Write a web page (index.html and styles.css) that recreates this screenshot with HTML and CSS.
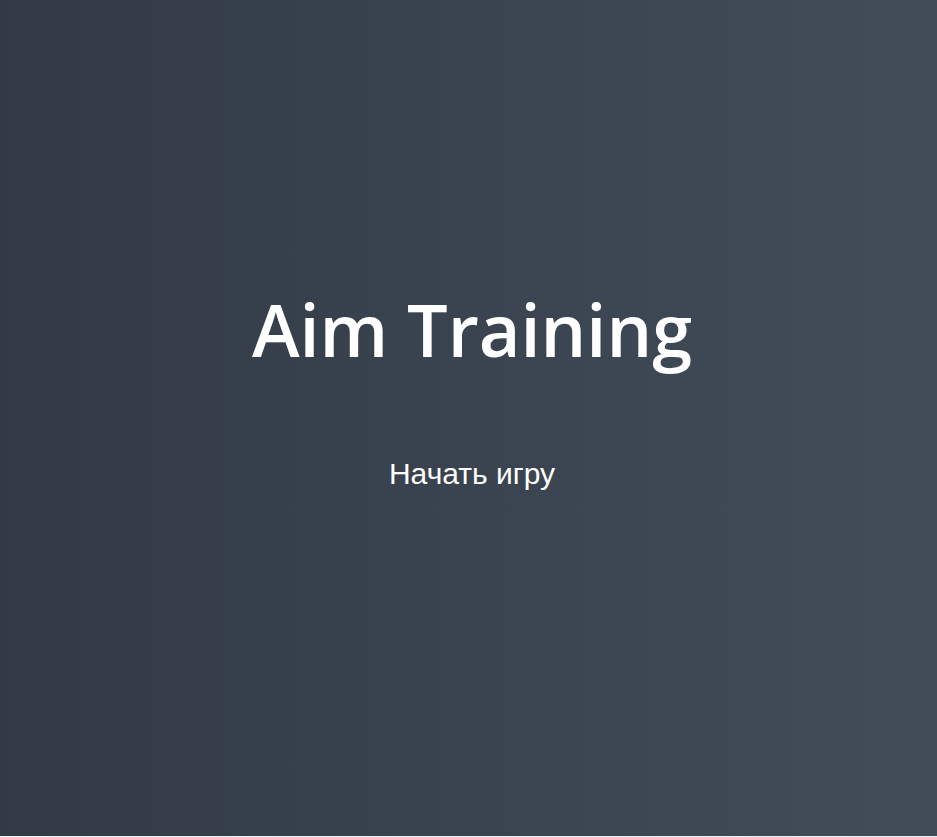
FILE: index.html
```html
<!DOCTYPE html>
<html lang="ru">
<head>
<meta charset="utf-8">
<title>Aim Training</title>
<link rel="stylesheet" href="styles.css">
</head>
<body>
<div class="screen">
  <h1 class="title">Aim Training</h1>
  <a href="#" class="start">Начать игру</a>
</div>
</body>
</html>
```
FILE: styles.css
```css
html, body {
  margin: 0;
  padding: 0;
  background: #f0f0f0;
}
.screen {
  box-sizing: border-box;
  height: 836px;
  padding: 0 0 59px 7px;
  background: linear-gradient(90deg, #313a45 0%, #434d5a 100%);
  display: flex;
  flex-direction: column;
  align-items: center;
  justify-content: center;
  color: #fff;
}
.title {
  margin: 0 0 84px;
  font-family: "Open Sans", sans-serif;
  font-weight: 600;
  font-size: 72px;
  line-height: 1.2;
}
.start {
  font-family: "Liberation Sans", Arial, sans-serif;
  font-size: 30px;
  color: #fff;
  text-decoration: none;
}
```
